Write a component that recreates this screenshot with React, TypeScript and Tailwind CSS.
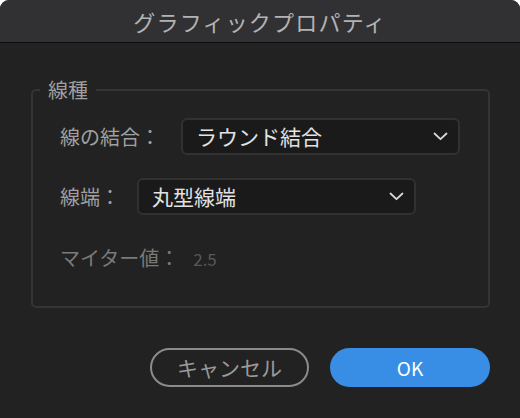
import * as React from "react";

const FONT = { fontFamily: '"Noto Sans CJK JP", "Noto Sans", sans-serif' };

function Chevron() {
  return (
    <svg width="15" height="9" viewBox="0 0 15 9" fill="none" className="shrink-0">
      <path d="M1.5 1.5 L7.5 7.2 L13.5 1.5" stroke="#d8d8d8" strokeWidth="1.8" strokeLinecap="round" strokeLinejoin="round" />
    </svg>
  );
}

function Select({ value, width }: { value: string; width: string }) {
  return (
    <div
      className={`flex h-[37px] ${width} items-center justify-between rounded-[6px] border-2 border-[#313131] bg-[#1a1a1a] pl-[13px] pr-[10px]`}
    >
      <span className="text-[21px] leading-none text-[#e2e2e2]">{value}</span>
      <Chevron />
    </div>
  );
}

export default function App() {
  return (
    <div className="h-[418px] w-[520px] bg-white" style={FONT}>
      <div className="flex h-full w-full flex-col overflow-hidden rounded-t-[9px] bg-[#222222]">
        <div className="flex h-[43px] shrink-0 items-center justify-center border-b-[1.5px] border-[#0c0c0c] bg-[#313133]">
          <span className="text-[22px] leading-none tracking-[1.2px] text-[#b3b3b3]">グラフィックプロパティ</span>
        </div>

        <div className="px-[31px] pt-[37px]">
          <fieldset className="h-[228px] rounded-[5px] border-2 border-[#343434] px-0">
            <legend className="ml-[7px] px-[8px] text-[20px] leading-none text-[#a0a0a0]">線種</legend>
            <div className="pl-[27px] pr-[28px]">
              <div className="mt-[18px] flex items-center">
                <span className="w-[121px] text-[20px] leading-none text-[#a0a0a0]">線の結合：</span>
                <Select value="ラウンド結合" width="w-[279px]" />
              </div>
              <div className="mt-[23px] flex items-center">
                <span className="w-[77px] text-[20px] leading-none text-[#a0a0a0]">線端：</span>
                <Select value="丸型線端" width="w-[279px]" />
              </div>
              <div className="mt-[33px] flex items-center">
                <span className="text-[20px] leading-none text-[#7a7a7a]">マイター値：</span>
                <span className="ml-[14px] text-[17px] leading-none text-[#585858]">2.5</span>
              </div>
            </div>
          </fieldset>
        </div>

        <div className="mt-[40px] flex justify-end gap-[21px] pr-[30px]">
          <button className="flex h-[39px] w-[159px] items-center justify-center rounded-full border-[2.5px] border-[#8b8b8b] text-[21px] leading-none text-[#9a9a9a]">
            キャンセル
          </button>
          <button className="flex h-[39px] w-[160px] items-center justify-center rounded-full bg-[#378ee4] text-[19px] font-normal leading-none text-white">
            OK
          </button>
        </div>
      </div>
    </div>
  );
}
